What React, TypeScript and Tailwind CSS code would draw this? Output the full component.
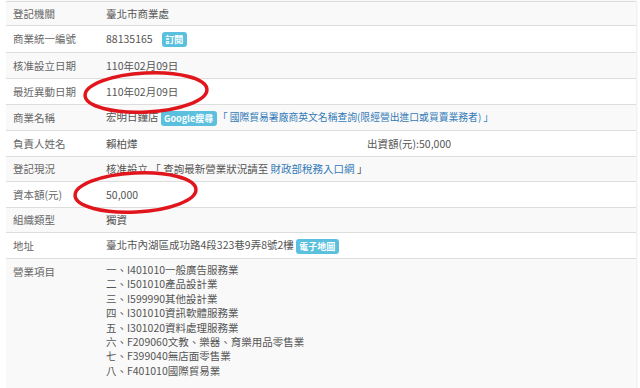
import React from "react";

const Badge = ({ children, className = "" }: { children: React.ReactNode; className?: string }) => (
  <span
    className={`inline-block align-middle bg-[#5bc0de] text-white text-[9px] font-bold leading-[15px] px-[3.5px] rounded-[3px] ${className}`}
  >
    {children}
  </span>
);

const Row = ({
  label,
  h,
  gray,
  children,
  top = false,
}: {
  label: string;
  h: string;
  gray?: boolean;
  children: React.ReactNode;
  top?: boolean;
}) => (
  <div className={`flex border-b border-[#dddddd] ${h} ${gray ? "bg-[#f9f9f9]" : "bg-white"} ${top ? "items-start" : "items-center"}`}>
    <div className={`w-[100px] pl-[7px] shrink-0 text-[#666] ${top ? "pt-[5px]" : ""}`}>{label}</div>
    <div className="flex-1 whitespace-pre">{children}</div>
  </div>
);

const items = [
  "一、I401010一般廣告服務業",
  "二、I501010產品設計業",
  "三、I599990其他設計業",
  "四、I301010資訊軟體服務業",
  "五、I301020資料處理服務業",
  "六、F209060文教、樂器、育樂用品零售業",
  "七、F399040無店面零售業",
  "八、F401010國際貿易業",
];

export default function App() {
  return (
    <div className="relative w-[640px] h-[388px] overflow-hidden bg-white text-[10.5px] text-[#555] font-['Noto_Sans_CJK_TC','Liberation_Sans',sans-serif]">
      <div className="ml-[6px] mt-[1px] w-[630px] border-t border-[#dddddd] shadow-[1px_0_2px_rgba(0,0,0,0.08)]">
        <Row label="登記機關" h="h-[24px]" gray>
          臺北市商業處
        </Row>
        <Row label="商業統一編號" h="h-[27px]">
          <span>88135165</span>
          <Badge className="ml-[9px]">訂閱</Badge>
        </Row>
        <Row label="核准設立日期" h="h-[26px]" gray>
          110年02月09日
        </Row>
        <Row label="最近異動日期" h="h-[26px]">
          110年02月09日
        </Row>
        <Row label="商業名稱" h="h-[26px]" gray>
          <span>宏明日鐘店</span>
          <Badge className="ml-[2px]">Google搜尋</Badge>
          <span className="ml-[1px] text-[#337ab7] text-[9.8px]">「 國際貿易署廠商英文名稱查詢(限經營出進口或買賣業務者) 」</span>
        </Row>
        <Row label="負責人姓名" h="h-[26px]">
          <span className="inline-block w-[261px]">賴柏燁</span>
          <span>出資額(元):50,000</span>
        </Row>
        <Row label="登記現況" h="h-[25px]" gray>
          <span>核准設立 「 查詢最新營業狀況請至 </span>
          <span className="text-[#337ab7]">財政部稅務入口網</span>
          <span> 」</span>
        </Row>
        <Row label="資本額(元)" h="h-[26px]">
          50,000
        </Row>
        <Row label="組織類型" h="h-[25px]" gray>
          獨資
        </Row>
        <Row label="地址" h="h-[26px]">
          <span>臺北市內湖區成功路4段323巷9弄8號2樓</span>
          <Badge className="ml-[2px]">電子地圖</Badge>
        </Row>
        <Row label="營業項目" h="h-[140px]" gray top>
          <div className="flex flex-col pt-[4px]">
            {items.map((t) => (
              <span key={t} className="leading-[14.4px]">
                {t}
              </span>
            ))}
          </div>
        </Row>
      </div>
      <svg className="absolute left-0 top-0 pointer-events-none" width="640" height="388" viewBox="0 0 640 388">
        <ellipse cx="146" cy="92.5" rx="61" ry="19.5" transform="rotate(-3 146 92.5)" fill="none" stroke="#e0161c" strokeWidth="3.5" />
        <ellipse cx="135.5" cy="192.5" rx="60.5" ry="19.5" transform="rotate(-3 135.5 192.5)" fill="none" stroke="#e0161c" strokeWidth="3.5" />
      </svg>
    </div>
  );
}
